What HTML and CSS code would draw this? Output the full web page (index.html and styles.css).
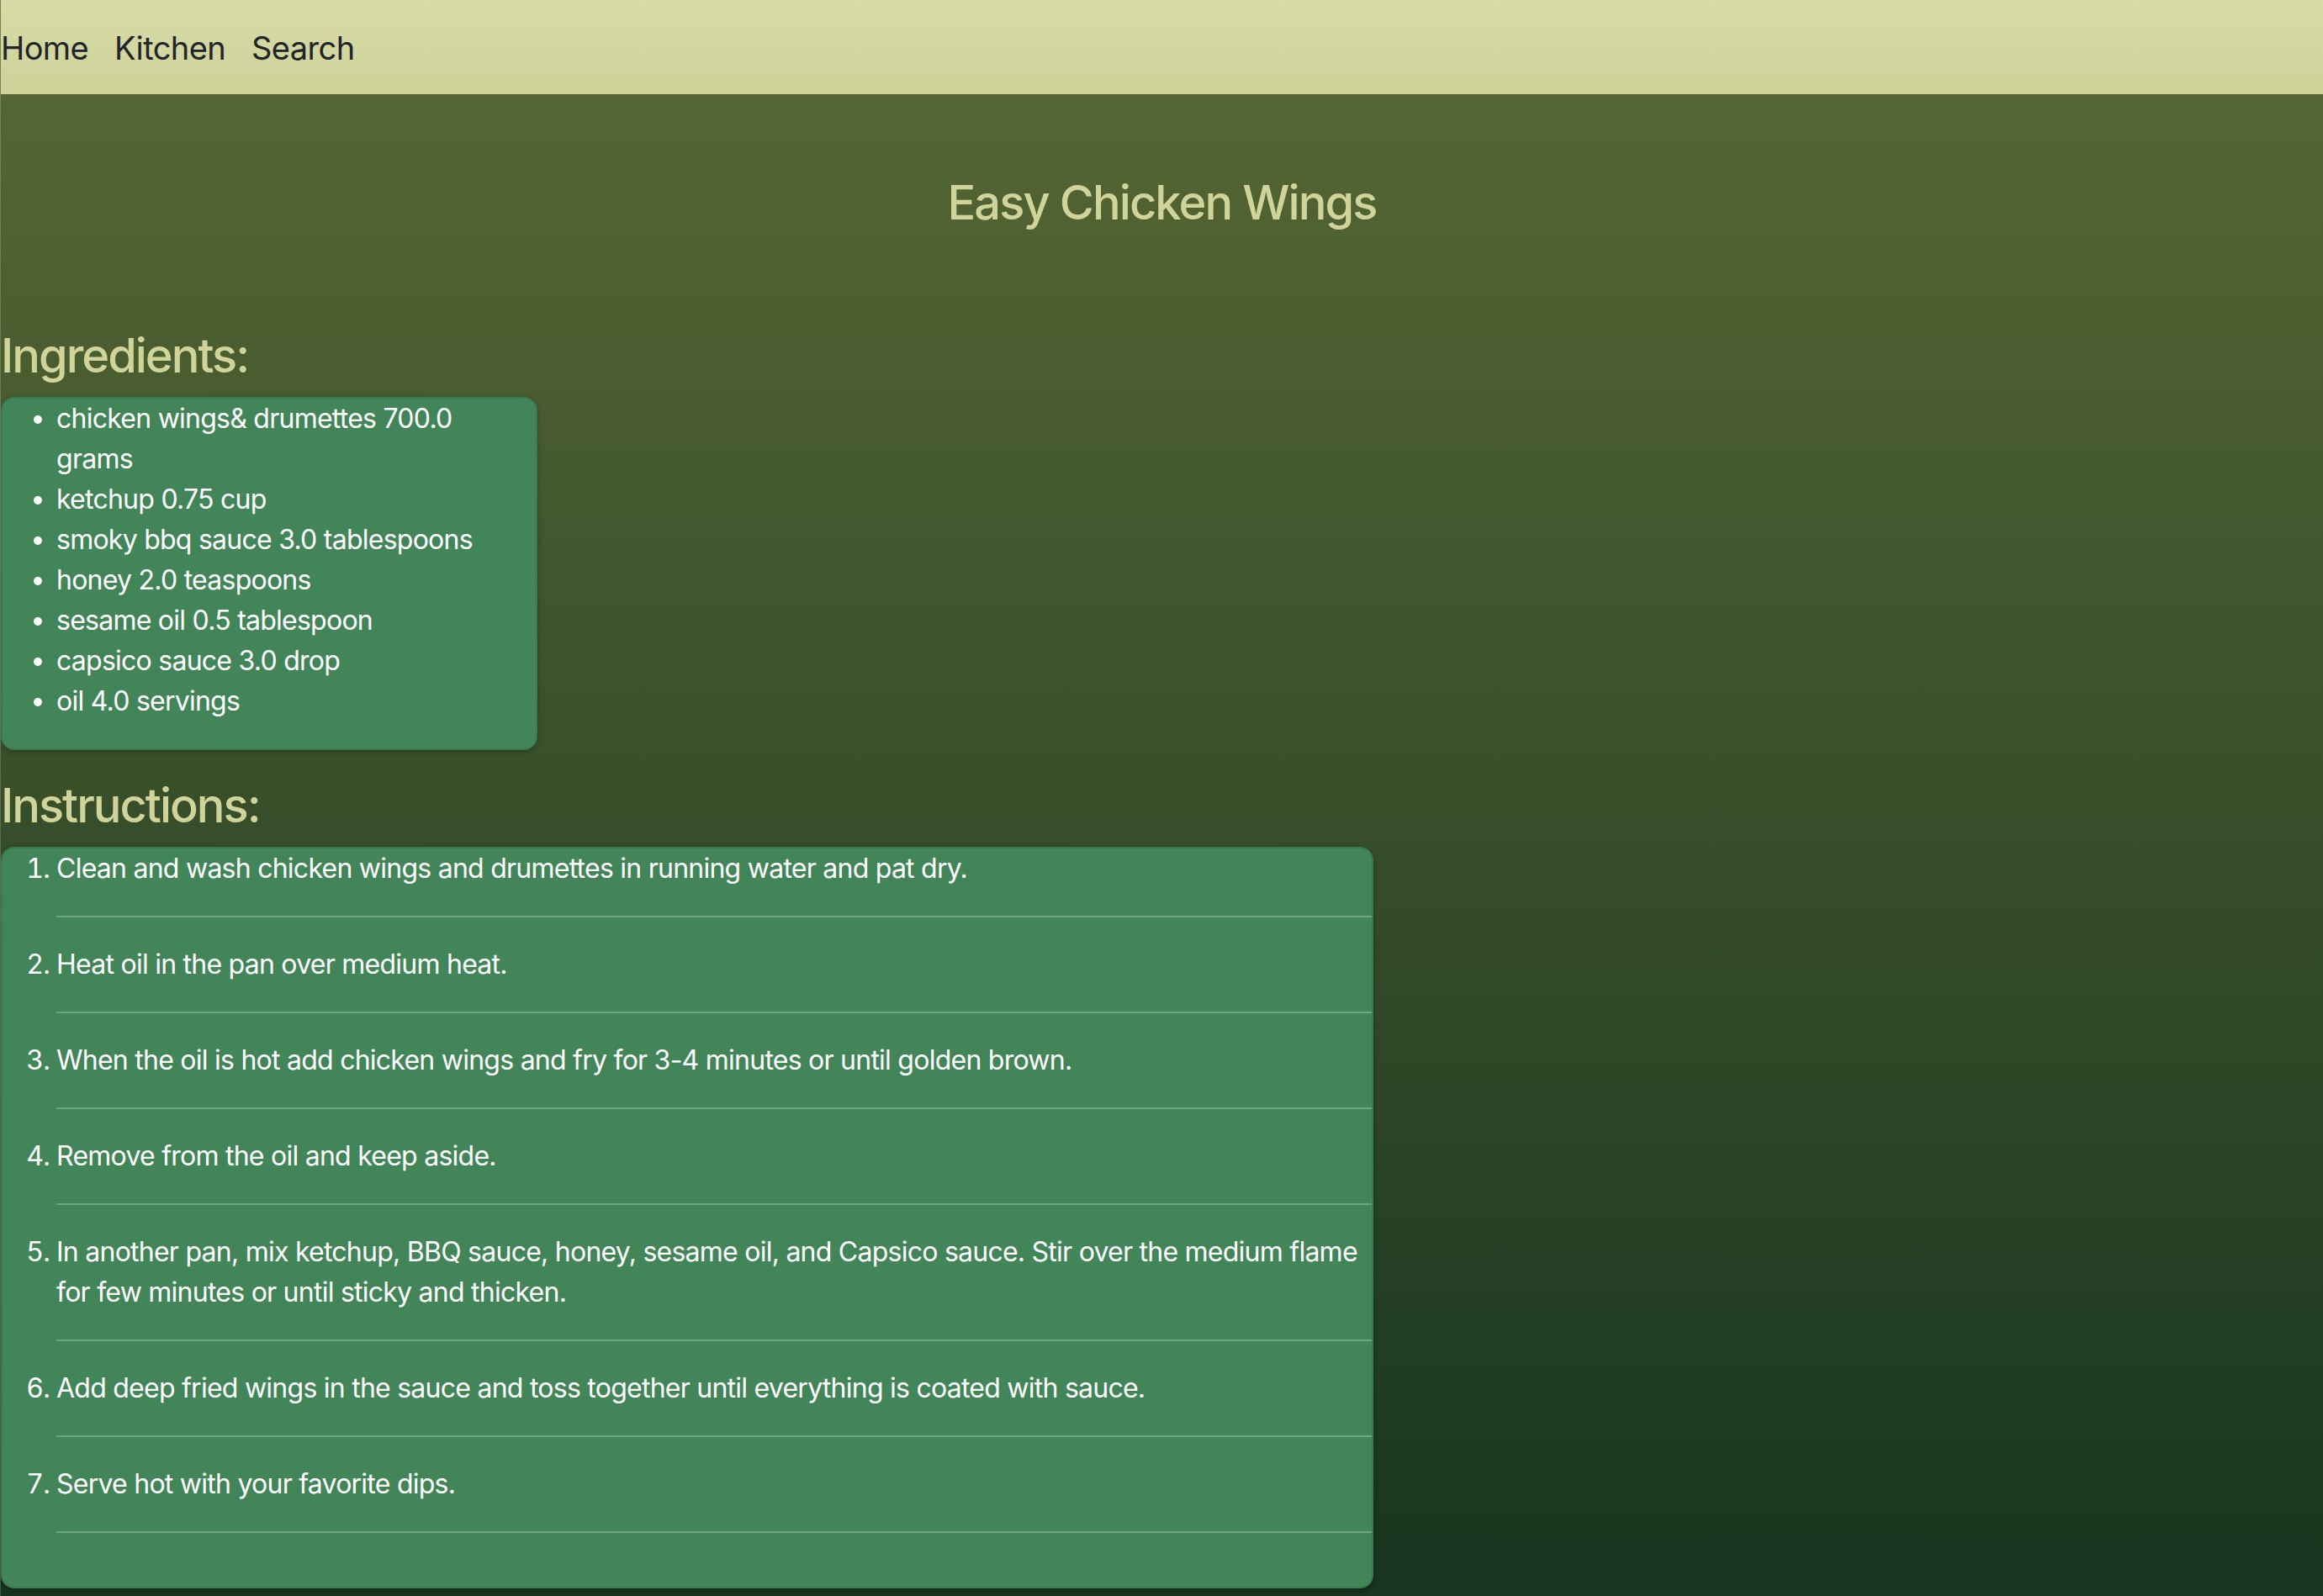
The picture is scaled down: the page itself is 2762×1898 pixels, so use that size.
FILE: index.html
```html
<!DOCTYPE html>
<html lang="en">
<head>
<meta charset="utf-8">
<title>Easy Chicken Wings</title>
<link rel="stylesheet" href="styles.css">
</head>
<body>
<nav class="navbar">
  <a class="nav-link" href="#">Home</a>
  <a class="nav-link" href="#">Kitchen</a>
  <a class="nav-link" href="#">Search</a>
</nav>
<main class="page">
  <h1 class="recipe-title">Easy Chicken Wings</h1>
  <h2 class="section-heading">Ingredients:</h2>
  <div class="card card-ingredients">
    <ul class="ingredient-list">
      <li>chicken wings&amp; drumettes 700.0 grams</li>
      <li>ketchup 0.75 cup</li>
      <li>smoky bbq sauce 3.0 tablespoons</li>
      <li>honey 2.0 teaspoons</li>
      <li>sesame oil 0.5 tablespoon</li>
      <li>capsico sauce 3.0 drop</li>
      <li>oil 4.0 servings</li>
    </ul>
  </div>
  <h2 class="section-heading">Instructions:</h2>
  <div class="card card-instructions">
    <ol class="step-list">
      <li>Clean and wash chicken wings and drumettes in running water and pat dry.</li>
      <li>Heat oil in the pan over medium heat.</li>
      <li>When the oil is hot add chicken wings and fry for 3-4 minutes or until golden brown.</li>
      <li>Remove from the oil and keep aside.</li>
      <li>In another pan, mix ketchup, BBQ sauce, honey, sesame oil, and Capsico sauce. Stir over the medium flame for few minutes or until sticky and thicken.</li>
      <li>Add deep fried wings in the sauce and toss together until everything is coated with sauce.</li>
      <li>Serve hot with your favorite dips.</li>
    </ol>
  </div>
</main>
</body>
</html>
```

FILE: styles.css
```css
* {
  box-sizing: border-box;
}

html, body {
  margin: 0;
  padding: 0;
}

body {
  min-height: 1898px;
  font-family: "Inter", "Roboto", "Liberation Sans", sans-serif;
  font-size: 32px;
  line-height: 48px;
  letter-spacing: -0.75px;
  color: #ffffff;
  background: linear-gradient(180deg, #556634 0px, #556634 112px, #17351f 1898px);
  border-left: 1px solid rgba(255, 255, 255, 0.18);
}

.navbar {
  height: 112px;
  display: flex;
  align-items: center;
  gap: 31px;
  padding-top: 2px;
  background: linear-gradient(180deg, #d7dba7 0%, #cdd298 100%);
}

.nav-link {
  font-size: 38px;
  line-height: 58px;
  letter-spacing: -0.6px;
  color: #212529;
  text-decoration: none;
}

.page {
  display: flex;
  flex-direction: column;
  align-items: flex-start;
}

.recipe-title {
  align-self: stretch;
  text-align: center;
  margin: 96px 0 0 0;
  font-size: 56px;
  line-height: 67px;
  font-weight: 500;
  letter-spacing: -1.9px;
  color: #d1d49a;
}

.section-heading {
  margin: 115px 0 15px 0;
  font-size: 56px;
  line-height: 67px;
  font-weight: 500;
  letter-spacing: -2px;
  color: #d1d49a;
}

.card-ingredients + .section-heading {
  margin-top: 33px;
}

.card {
  background: #428558;
  border: 2px solid #3a7a4e;
  border-radius: 16px;
  box-shadow: 0 2px 6px rgba(0, 0, 0, 0.3);
}

.card-ingredients {
  width: 638px;
}

.card-instructions {
  width: 1632px;
}

.ingredient-list {
  margin: 0 0 32px 0;
  padding: 0 12px 0 64px;
}

.step-list {
  margin: 0;
  padding: 0 0 32px 64px;
}

.step-list li {
  padding-bottom: 32px;
  margin-bottom: 32px;
  border-bottom: 2px solid rgba(255, 255, 255, 0.25);
}
```
